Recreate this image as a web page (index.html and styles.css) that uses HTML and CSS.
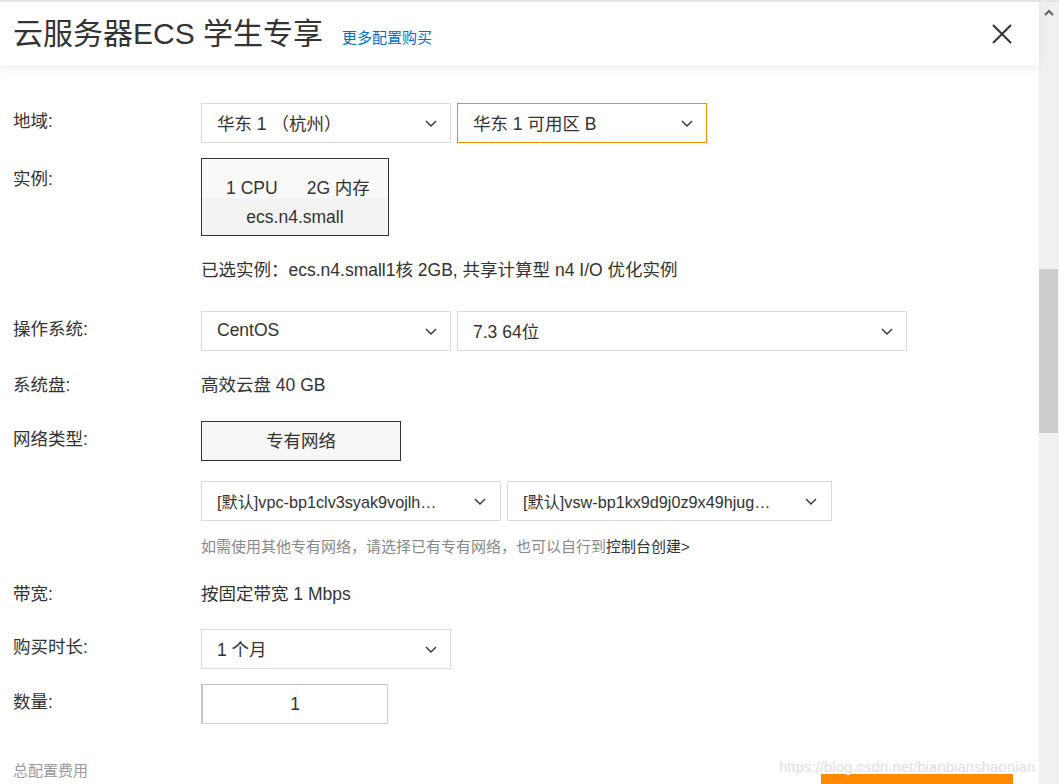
FILE: index.html
```html
<!DOCTYPE html>
<html lang="zh-CN">
<head>
<meta charset="utf-8">
<title>云服务器ECS 学生专享</title>
<link rel="stylesheet" href="styles.css">
</head>
<body>
<div class="page">
  <div class="main">
    <header class="header">
      <h1 class="title">云服务器ECS 学生专享</h1>
      <a class="more" href="#">更多配置购买</a>
      <span class="spacer"></span>
      <svg class="close" width="22" height="22" viewBox="0 0 22 22"><path d="M2 2 L20 20 M20 2 L2 20" stroke="#333" stroke-width="2" fill="none"/></svg>
    </header>

    <div class="form">
      <div class="row row-region">
        <div class="label label-box">地域:</div>
        <div class="value inline">
          <div class="select w250"><span class="sel-text">华东 1 （杭州）</span><svg class="chev" width="12" height="7" viewBox="0 0 12 7"><path d="M1 1 L6 6 L11 1" stroke="#333" stroke-width="1.4" fill="none"/></svg></div>
          <div class="select w250 active"><span class="sel-text">华东 1 可用区 B</span><svg class="chev" width="12" height="7" viewBox="0 0 12 7"><path d="M1 1 L6 6 L11 1" stroke="#333" stroke-width="1.4" fill="none"/></svg></div>
        </div>
      </div>

      <div class="row row-instance">
        <div class="label label-box label-card">实例:</div>
        <div class="value">
          <div class="card">
            <div class="card-top"><span>1 CPU</span><span class="mem">2G 内存</span></div>
            <div class="card-bottom">ecs.n4.small</div>
          </div>
          <div class="note">已选实例：ecs.n4.small1核 2GB, 共享计算型 n4 I/O 优化实例</div>
        </div>
      </div>

      <div class="row row-os">
        <div class="label label-box">操作系统:</div>
        <div class="value inline">
          <div class="select w250"><span class="sel-text">CentOS</span><svg class="chev" width="12" height="7" viewBox="0 0 12 7"><path d="M1 1 L6 6 L11 1" stroke="#333" stroke-width="1.4" fill="none"/></svg></div>
          <div class="select w450"><span class="sel-text">7.3 64位</span><svg class="chev" width="12" height="7" viewBox="0 0 12 7"><path d="M1 1 L6 6 L11 1" stroke="#333" stroke-width="1.4" fill="none"/></svg></div>
        </div>
      </div>

      <div class="row row-disk">
        <div class="label label-text">系统盘:</div>
        <div class="value text">高效云盘 40 GB</div>
      </div>

      <div class="row row-net">
        <div class="label label-box">网络类型:</div>
        <div class="value">
          <div class="net-btn">专有网络</div>
          <div class="inline vpc">
            <div class="select w300 vpc-sel"><span class="sel-text">[默认]vpc-bp1clv3syak9vojlh…</span><svg class="chev" width="12" height="7" viewBox="0 0 12 7"><path d="M1 1 L6 6 L11 1" stroke="#333" stroke-width="1.4" fill="none"/></svg></div>
            <div class="select w325 vpc-sel"><span class="sel-text">[默认]vsw-bp1kx9d9j0z9x49hjug…</span><svg class="chev" width="12" height="7" viewBox="0 0 12 7"><path d="M1 1 L6 6 L11 1" stroke="#333" stroke-width="1.4" fill="none"/></svg></div>
          </div>
          <div class="hint">如需使用其他专有网络，请选择已有专有网络，也可以自行到<a href="#" class="hint-link">控制台创建&gt;</a></div>
        </div>
      </div>

      <div class="row row-bw">
        <div class="label label-text">带宽:</div>
        <div class="value text">按固定带宽 1 Mbps</div>
      </div>

      <div class="row row-dur">
        <div class="label label-box">购买时长:</div>
        <div class="value inline">
          <div class="select w250"><span class="sel-text">1 个月</span><svg class="chev" width="12" height="7" viewBox="0 0 12 7"><path d="M1 1 L6 6 L11 1" stroke="#333" stroke-width="1.4" fill="none"/></svg></div>
        </div>
      </div>

      <div class="row row-qty">
        <div class="label label-box">数量:</div>
        <div class="value inline">
          <div class="qty">1</div>
        </div>
      </div>

      <div class="footer">
        <div class="total">总配置费用</div>
        <div class="buy"></div>
      </div>
    </div>
    <div class="watermark">https://blog.csdn.net/bianbianshaonian</div>
  </div>

  <div class="scrollbar">
    <svg class="sb-up" width="10" height="7" viewBox="0 0 10 7"><path d="M1 6 L5 2 L9 6" stroke="#606060" stroke-width="2" fill="none"/></svg>
    <div class="sb-thumb"></div>
  </div>
</div>
</body>
</html>
```

FILE: styles.css
```css
* { box-sizing: border-box; }

html, body {
  margin: 0;
  padding: 0;
  height: 784px;
  overflow: hidden;
  background: #fff;
}

body {
  font-family: "Liberation Sans", "Noto Sans CJK SC", Arial, sans-serif;
  color: #333;
  font-size: 17.5px;
}

.page {
  display: flex;
  height: 784px;
  border-top: 2px solid #e6e6e6;
}

.main {
  flex: 1;
  position: relative;
  min-width: 0;
}

.header {
  height: 64px;
  display: flex;
  align-items: center;
  padding: 0 26px 0 13px;
  box-shadow: 0 3px 8px rgba(0, 0, 0, 0.07);
  position: relative;
  z-index: 1;
}

.title {
  margin: 0;
  font-size: 30px;
  font-weight: normal;
  line-height: 36px;
  color: #333;
}

.more {
  margin-left: 19px;
  margin-top: 7px;
  font-size: 15px;
  line-height: 20px;
  color: #0070cc;
  text-decoration: none;
}

.spacer { flex: 1; }

.close { display: block; }

.form {
  padding-top: 37px;
}

.row {
  display: flex;
  align-items: flex-start;
}

.label {
  width: 201px;
  padding-left: 13px;
  flex: none;
  font-size: 17.5px;
  color: #333;
}

.label-box { line-height: 37px; }
.label-card { line-height: 42px; }
.label-text { line-height: 24px; }

.value { flex: none; }
.value.text { line-height: 24px; font-size: 17.5px; }

.inline { display: flex; gap: 6px; }

.select {
  height: 40px;
  border: 1px solid #d9d9d9;
  background: #fff;
  display: flex;
  align-items: center;
  justify-content: space-between;
  padding: 0 13px 2px 15px;
  font-size: 17.5px;
  color: #333;
}

.select .chev { margin-top: 2px; }

.select.active { border-color: #ff8a00; }

.sel-text {
  white-space: nowrap;
  overflow: hidden;
}

.chev { flex: none; display: block; }

.w250 { width: 250px; }
.w300 { width: 300px; }
.w325 { width: 325px; }
.w450 { width: 450px; }

.vpc-sel { padding-right: 14px; padding-bottom: 0; font-size: 16.2px; }
.vpc-sel .chev { margin-top: 0; }

.row-instance { margin-top: 15px; }

.card {
  width: 188px;
  border: 1px solid #333;
}

.card-top {
  height: 39px;
  padding-top: 19px;
  padding-left: 6px;
  line-height: 20px;
  background: #fafafa;
  display: flex;
  justify-content: center;
  gap: 29px;
}

.card-bottom {
  height: 37px;
  padding-top: 9px;
  line-height: 20px;
  background: #f3f3f3;
  text-align: center;
}

.note {
  margin-top: 22px;
  line-height: 24px;
}

.row-os { margin-top: 29px; }
.row-disk { margin-top: 22px; }
.row-net { margin-top: 24px; }

.net-btn {
  width: 200px;
  height: 40px;
  border: 1px solid #333;
  background: #f7f7f7;
  text-align: center;
  line-height: 38px;
}

.vpc { margin-top: 20px; }

.hint {
  margin-top: 16px;
  line-height: 20px;
  font-size: 15px;
  color: #888;
}

.hint-link {
  color: #333;
  text-decoration: none;
}

.row-bw { margin-top: 25px; }
.row-dur { margin-top: 23px; }
.row-qty { margin-top: 15px; }

.qty {
  width: 187px;
  height: 40px;
  border: 1px solid #cfcfcf;
  border-left: 2px solid #c4c4c4;
  border-top-color: #c4c4c4;
  text-align: center;
  line-height: 38px;
}

.footer {
  display: flex;
  justify-content: space-between;
  align-items: flex-start;
  margin-top: 37px;
  padding: 0 26px 0 13px;
}

.total {
  font-size: 15px;
  line-height: 20px;
  color: #999;
}

.buy {
  width: 192px;
  height: 40px;
  margin-top: 13px;
  background: #ff8a00;
}

.watermark {
  position: absolute;
  left: 779px;
  top: 755px;
  font-size: 15px;
  line-height: 20px;
  color: #e0e0e0;
  white-space: nowrap;
  font-family: "Liberation Sans", Arial, sans-serif;
}

.scrollbar {
  width: 20px;
  flex: none;
  background: #f0f0f0;
  position: relative;
}

.sb-up {
  position: absolute;
  left: 5px;
  top: 7px;
}

.sb-thumb {
  position: absolute;
  left: 0;
  top: 267px;
  width: 19px;
  height: 164px;
  background: #cdcdcd;
}
```
